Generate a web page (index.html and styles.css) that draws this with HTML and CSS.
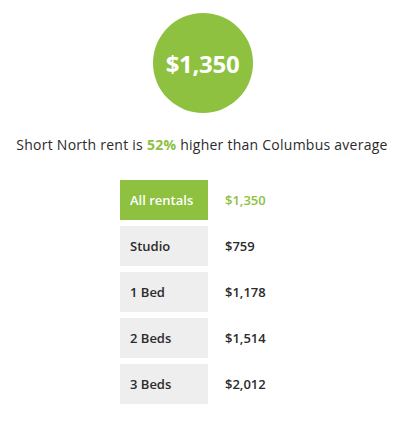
FILE: index.html
```html
<!DOCTYPE html>
<html>
<head>
<meta charset="utf-8">
<link rel="stylesheet" href="styles.css">
</head>
<body>
<div class="wrap">
  <div class="badge">$1,350</div>
  <p class="summary">Short North rent is <span class="hl">52%</span> higher than Columbus average</p>
  <div class="table">
    <div class="row active"><div class="label">All rentals</div><div class="price">$1,350</div></div>
    <div class="row"><div class="label">Studio</div><div class="price">$759</div></div>
    <div class="row"><div class="label">1 Bed</div><div class="price">$1,178</div></div>
    <div class="row"><div class="label">2 Beds</div><div class="price">$1,514</div></div>
    <div class="row"><div class="label">3 Beds</div><div class="price">$2,012</div></div>
  </div>
</div>
</body>
</html>
```
FILE: styles.css
```css
html, body {
  margin: 0;
  padding: 0;
  background: #ffffff;
}
body {
  font-family: "Open Sans", "Noto Sans", sans-serif;
  color: #2b2b2b;
}
.wrap {
  width: 404px;
  display: flex;
  flex-direction: column;
  align-items: center;
  padding-top: 13px;
}
.badge {
  width: 100px;
  height: 100px;
  border-radius: 50%;
  background: #8dc13f;
  color: #fff;
  display: flex;
  align-items: center;
  justify-content: center;
  font-size: 24px;
  font-weight: 700;
  letter-spacing: -0.3px;
  margin-left: 1px;
}
.summary {
  margin: 22px 0 0 0;
  font-size: 14px;
  line-height: 20px;
  letter-spacing: 0.25px;
  white-space: nowrap;
}
.hl {
  color: #8dc13f;
  font-weight: 700;
}
.table {
  margin-top: 25px;
  align-self: flex-start;
  margin-left: 120px;
  display: flex;
  flex-direction: column;
  gap: 6px;
}
.row {
  display: flex;
  align-items: center;
  height: 40px;
}
.label {
  width: 88px;
  height: 40px;
  box-sizing: border-box;
  padding-left: 10px;
  display: flex;
  align-items: center;
  background: #eeeeee;
  font-size: 13px;
  font-weight: 600;
  color: #2b2b2b;
}
.price {
  margin-left: 17px;
  font-size: 13px;
  font-weight: 600;
  color: #2b2b2b;
}
.active .label {
  background: #8dc13f;
  color: #fff;
}
.active .price {
  color: #8dc13f;
}
```
